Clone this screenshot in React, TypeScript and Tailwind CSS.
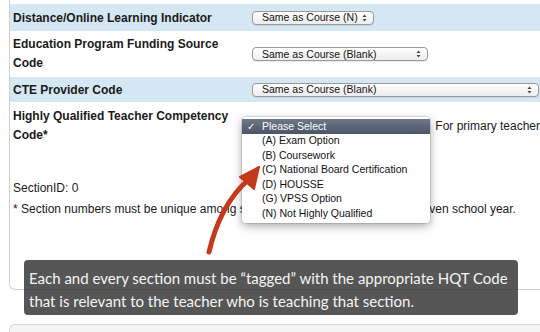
import React from "react";

const sans = { fontFamily: '"Liberation Sans", Arial, sans-serif' };

function Select({ label, width }: { label: string; width: string }) {
  return (
    <div
      className={`${width} h-[14px] flex items-center justify-between whitespace-nowrap rounded-[4px] border border-[#9a9a9a] bg-gradient-to-b from-white to-[#ececec] pl-[9px] pr-[6px] text-[10.5px] leading-none text-[#111] shadow-[0_1px_0_rgba(0,0,0,0.08)]`}
    >
      <span>{label}</span>
      <svg width="5" height="8" viewBox="0 0 5 8">
        <path d="M0.5 3 L2.5 0.5 L4.5 3 Z" fill="#444" />
        <path d="M0.5 5 L2.5 7.5 L4.5 5 Z" fill="#444" />
      </svg>
    </div>
  );
}

const options = [
  "(A) Exam Option",
  "(B) Coursework",
  "(C) National Board Certification",
  "(D) HOUSSE",
  "(G) VPSS Option",
  "(N) Not Highly Qualified",
];

export default function App() {
  return (
    <div className="relative w-[540px] h-[332px] overflow-hidden bg-white text-[#1a1a1a]" style={sans}>
      {/* Form card */}
      <div className="ml-[9px] h-[290px] border-l border-b border-[#cfcfcf] rounded-bl-[6px] pt-[4px]">
        <div className="flex h-[27px] items-center bg-[#d5e7f2]">
          <div className="w-[242px] pl-[3px] text-[12px] font-bold">Distance/Online Learning Indicator</div>
          <Select label="Same as Course (N)" width="w-[122px]" />
        </div>
        <div className="flex h-[46px] items-center">
          <div className="w-[242px] pl-[3px] pr-[24px] text-[12px] font-bold leading-[19px]">
            Education Program Funding Source Code
          </div>
          <Select label="Same as Course (Blank)" width="w-[176px]" />
        </div>
        <div className="flex h-[25px] items-center bg-[#d5e7f2]">
          <div className="w-[242px] pl-[3px] text-[12px] font-bold">CTE Provider Code</div>
          <Select label="Same as Course (Blank)" width="w-[287px]" />
        </div>
        <div className="flex h-[68px] pt-[5px]">
          <div className="w-[232px] pl-[3px] text-[12px] font-bold leading-[19px]">
            Highly Qualified Teacher Competency Code*
          </div>
          <div className="flex h-[24px] items-start pt-[13px]">
            <div className="w-[201px]" />
            <span className="text-[12px] leading-none whitespace-nowrap">For primary teacher</span>
          </div>
        </div>
        <div className="pl-[3px] text-[12px] leading-[21px] whitespace-nowrap">
          <div className="pt-[8px]">SectionID: 0</div>
          <div>* Section numbers must be unique among sections of the same course for a given school year.</div>
        </div>
      </div>

      {/* Next card */}
      <div className="ml-[9px] mt-[34px] h-[20px] rounded-tl-[6px] border-l border-t border-[#d6d6d6] bg-[#f4f4f4]" />

      {/* Open dropdown menu */}
      <div className="absolute left-[242px] top-[117px] w-[188px] rounded-[4px] bg-white py-[2px] text-[10.5px] shadow-[0_3px_10px_rgba(0,0,0,0.35)] ring-1 ring-black/10">
        <div className="flex h-[15px] items-center bg-gradient-to-b from-[#6e7889] to-[#4c5567] text-white">
          <span className="w-[20px] pl-[5px] text-[10px]">✓</span>
          <span>Please Select</span>
        </div>
        {options.map((o) => (
          <div key={o} className="flex h-[14.5px] items-center pl-[20px] text-[#111]">
            {o}
          </div>
        ))}
      </div>

      {/* Arrow */}
      <svg className="absolute left-0 top-0" width="540" height="332" viewBox="0 0 540 332">
        <path d="M209 252 Q 220 205 248 180" stroke="#c4391b" strokeWidth="5" fill="none" strokeLinecap="round" />
        <path d="M259 167 L240 177 L254 189 Z" fill="#c4391b" stroke="#c4391b" strokeWidth="2" strokeLinejoin="round" />
      </svg>

      {/* Tooltip */}
      <div
        className="absolute left-[24px] top-[260px] w-[494px] h-[55px] rounded-[4px] bg-[#383838]/85 px-[5px] pt-[7px] text-[15px] leading-[23px] text-[#f4f4f4]"
        style={{ fontFamily: 'Lato, "Noto Sans", sans-serif' }}
      >
        <div>Each and every section must be “tagged” with the appropriate HQT Code</div>
        <div>that is relevant to the teacher who is teaching that section.</div>
      </div>
    </div>
  );
}
